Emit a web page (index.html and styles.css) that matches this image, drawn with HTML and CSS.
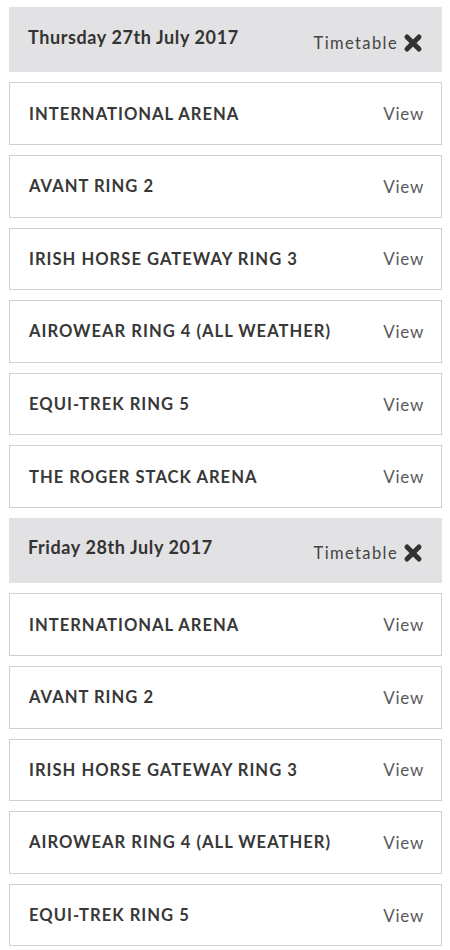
FILE: index.html
```html
<!DOCTYPE html>
<html>
<head>
<meta charset="utf-8">
<link rel="stylesheet" href="styles.css">
</head>
<body>
<div class="list">
  <div class="day">
    <span class="date">Thursday 27th July 2017</span>
    <span class="tt">Timetable <svg class="x" viewBox="0 0 20 20"><path d="M4 4 L16 16 M16 4 L4 16" stroke="#333" stroke-width="5" stroke-linecap="round"/></svg></span>
  </div>
  <div class="ring"><span class="name">INTERNATIONAL ARENA</span><span class="view">View</span></div>
  <div class="ring"><span class="name">AVANT RING 2</span><span class="view">View</span></div>
  <div class="ring"><span class="name">IRISH HORSE GATEWAY RING 3</span><span class="view">View</span></div>
  <div class="ring"><span class="name">AIROWEAR RING 4 (ALL WEATHER)</span><span class="view">View</span></div>
  <div class="ring"><span class="name">EQUI-TREK RING 5</span><span class="view">View</span></div>
  <div class="ring"><span class="name">THE ROGER STACK ARENA</span><span class="view">View</span></div>
  <div class="day">
    <span class="date">Friday 28th July 2017</span>
    <span class="tt">Timetable <svg class="x" viewBox="0 0 20 20"><path d="M4 4 L16 16 M16 4 L4 16" stroke="#333" stroke-width="5" stroke-linecap="round"/></svg></span>
  </div>
  <div class="ring"><span class="name">INTERNATIONAL ARENA</span><span class="view">View</span></div>
  <div class="ring"><span class="name">AVANT RING 2</span><span class="view">View</span></div>
  <div class="ring"><span class="name">IRISH HORSE GATEWAY RING 3</span><span class="view">View</span></div>
  <div class="ring"><span class="name">AIROWEAR RING 4 (ALL WEATHER)</span><span class="view">View</span></div>
  <div class="ring"><span class="name">EQUI-TREK RING 5</span><span class="view">View</span></div>
</div>
</body>
</html>
```
FILE: styles.css
```css
html, body { margin: 0; padding: 0; background: #fff; }
body { font-family: Lato, "Open Sans", sans-serif; color: #333; overflow: hidden; height: 950px; }
.list { display: flex; flex-direction: column; gap: 10px; padding: 7px 8px 0 9px; }
.day {
  height: 65px; box-sizing: border-box; background: #e2e1e3;
  display: flex; align-items: center; justify-content: space-between;
  padding: 0 19px 0 19px; margin-bottom: 0.4px;
}
.date { font-weight: 700; font-size: 18px; color: #333; margin-top: -6px; letter-spacing: 0.6px; }
.tt { font-size: 16.5px; color: #444; font-weight: 400; display: flex; align-items: center; gap: 5px; margin-top: 6px; letter-spacing: 1.4px; }
.x { width: 20px; height: 20px; }
.ring {
  height: 62.6px; box-sizing: border-box; border: 1px solid #cfcfcf; background: #fff;
  display: flex; align-items: center; justify-content: space-between;
  padding: 0 16px 0 19px;
}
.name { font-weight: 700; font-size: 16.6px; color: #383838; letter-spacing: 1px; }
.view { font-size: 17px; color: #5a5a5a; letter-spacing: 0.7px; margin-right: 1px; }
```
